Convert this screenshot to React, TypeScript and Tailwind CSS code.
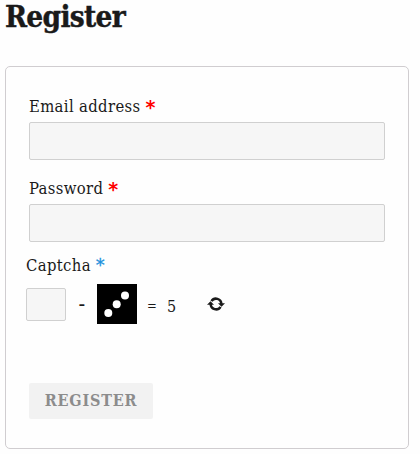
import React from "react";

function Field({ label, type }: { label: string; type: string }) {
  return (
    <label className="block h-[82px]">
      <span className="flex h-8 items-center gap-[5px] pt-[2px]">
        <span>{label}</span>
        <b className="h-4 font-['DejaVu_Sans'] text-[19px] leading-[16px] text-[#ff0000]">*</b>
      </span>
      <input type={type} className="block h-[38px] w-[356px] rounded-xs border border-[#d0d0d0] bg-[#f6f6f6] px-2 outline-none" />
    </label>
  );
}

function RefreshIcon() {
  return (
    <svg width="18" height="14" viewBox="0 0 18 14" fill="none" stroke="#1a1a1a" strokeWidth="2.5">
      <path d="M4.5 4.2A5.3 5.3 0 0 1 14.3 7" />
      <path d="M13.5 9.8A5.3 5.3 0 0 1 3.7 7" />
      <path d="M0 7.8 3.5 4.2 7 7.8ZM11 6.2 14.5 9.8 18 6.2Z" fill="#1a1a1a" stroke="none" />
    </svg>
  );
}

export default function App() {
  return (
    <main className="h-[454px] w-[420px] overflow-hidden bg-[#fefefe] pl-[5px] font-['DejaVu_Serif_Condensed','DejaVu_Serif',serif] text-[16.5px] leading-none tracking-[0.35px] text-[#1a1a1a]">
      <h1 className="h-[66px] pt-[2px] text-[29.5px] leading-[30px] font-bold tracking-[-0.7px] [-webkit-text-stroke:0.4px_#1a1a1a]">Register</h1>
      <form className="h-[383px] w-[404px] rounded-[5px] border border-[#d0cdd0] pt-[23px] pl-[23px]" onSubmit={(e) => e.preventDefault()}>
        <Field label="Email address" type="email" />
        <Field label="Password" type="password" />
        <div className="-ml-[3px]">
          <div className="flex h-[30px] items-start gap-[5px] pt-[4px]">
            <span>Captcha</span>
            <span className="font-['DejaVu_Sans'] text-[18px] leading-[14px] text-[#1e91dc] [-webkit-text-stroke:0.3px_#1e91dc]">*</span>
          </div>
          <div className="flex h-10 items-center">
            <input aria-label="Captcha" className="h-[33px] w-10 rounded-xs border border-[#d0d0d0] bg-[#f6f6f6] outline-none" />
            <span className="w-[31px] pl-px text-center text-[22px]">-</span>
            <svg width="40" height="40" viewBox="0 0 40 40">
              <path d="M0 0h40v40H0z" fill="#000" />
              <circle cx="11.3" cy="29" r="4" fill="#fff" />
              <circle cx="19.7" cy="20.3" r="4" fill="#fff" />
              <circle cx="28" cy="11.5" r="4" fill="#fff" />
            </svg>
            <span className="ml-[10px] w-5 pt-[3px] text-[13px]">=</span>
            <span className="w-10 pt-[5px] text-[16px]">5</span>
            <RefreshIcon />
          </div>
        </div>
        <button disabled className="mt-[59px] h-9 w-[124px] rounded-xs bg-[#f2f2f2] text-[16px] font-bold tracking-[0.8px] text-[#8c8c8c]">REGISTER</button>
      </form>
    </main>
  );
}
